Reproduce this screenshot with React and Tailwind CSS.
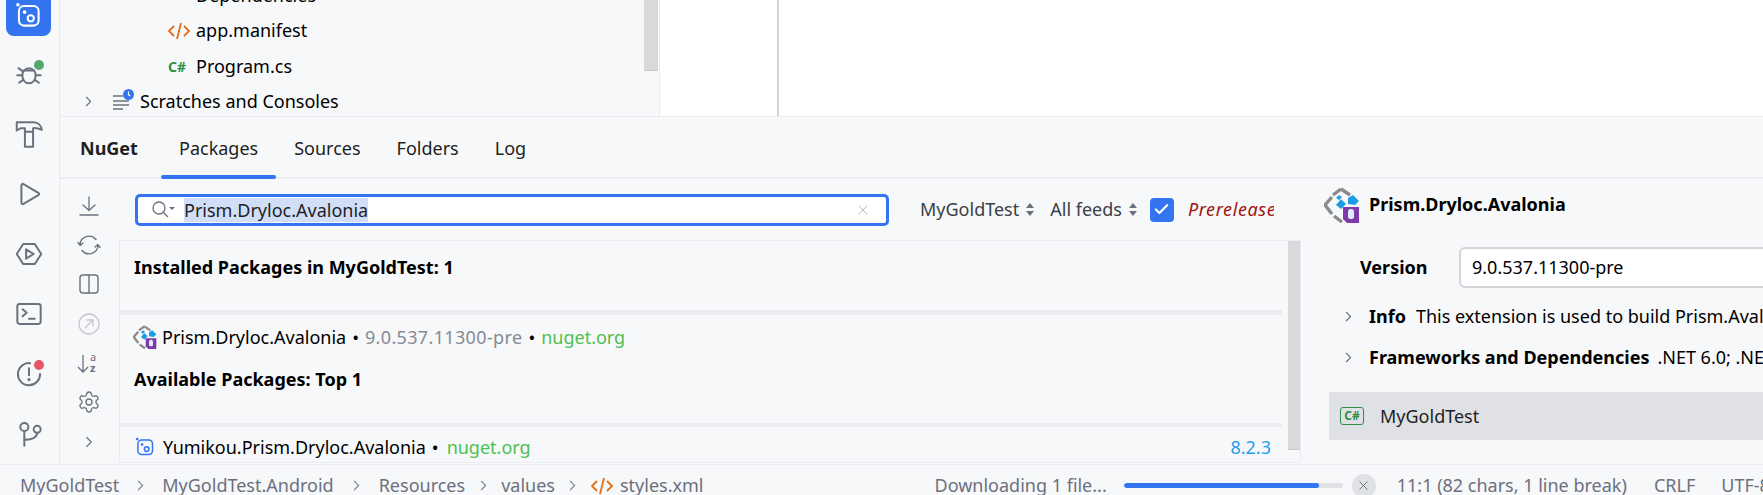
import { ChevronRight, X, Check, Settings } from 'lucide-react';

const font = { fontFamily: '"Noto Sans", "Open Sans", sans-serif' };

// stroke icon wrapper, all drawn on a 24 box
const Ico = ({ size = 28, color = '#6c707e', width = 1.7, children }) => (
  <svg width={size} height={size} viewBox="0 0 24 24" fill="none" stroke={color} strokeWidth={width} strokeLinecap="round" strokeLinejoin="round">
    {children}
  </svg>
);

const Dot = ({ color }) => (
  <span className="absolute right-[7px] top-[9px] w-[10px] h-[10px] rounded-full" style={{ background: color }} />
);

const RailItem = ({ children, active }) => (
  <div className={`relative w-[45px] h-[45px] shrink-0 flex items-center justify-center rounded-[8px] ${active ? 'bg-[#3574f0]' : ''}`}>
    {children}
  </div>
);

const ServicesIcon = ({ size, color }) => (
  <svg width={size} height={size} viewBox="0 0 24 24" fill="none" stroke={color} strokeWidth="1.8">
    <circle cx="2.6" cy="2.4" r="1.6" fill={color} stroke="none" />
    <rect x="3.5" y="3.5" width="17.5" height="17.5" rx="4.5" />
    <circle cx="8.5" cy="9" r="1.6" fill={color} stroke="none" />
    <circle cx="14" cy="14.5" r="2.8" />
  </svg>
);

const XmlIcon = () => (
  <svg width="24" height="20" viewBox="0 0 24 20" fill="none" stroke="#e66d17" strokeWidth="1.8" className="shrink-0">
    <path d="M7 5 L2 10 L7 15" />
    <path d="M17 5 L22 10 L17 15" />
    <path d="M14 2 L10 18" />
  </svg>
);

const PrismIcon = ({ size }) => (
  <svg width={size} height={size} viewBox="0 0 36 36" fill="none" className="shrink-0">
    <path d="M17 2 L26 8 M17 2 L9 8 M8 10 L1 18 L8 27 M10 29 L18 35" stroke="#8a8a8a" strokeWidth="3.4" />
    <path d="M12 11 L15 8 L18 10 L15 13 Z M12 18 L17 12 L22 17 L17 22 Z" fill="#1c9be6" />
    <path d="M24 11 L29 8 L35 14 L31 18 L24 17 Z" fill="#1c9be6" />
    <path d="M19 20 H35 V36 H23 L19 32 Z" fill="#7d3aa8" />
    <rect x="24" y="22" width="6" height="10" rx="2.500" fill="#dfeafc" />
  </svg>
);

const Tab = ({ children, active }) => (
  <div className="relative h-full flex items-center px-[18px] pt-[3px] text-[#1e1f22]">
    {children}
    {active && <span className="absolute left-0 right-0 bottom-[-2px] h-[4px] rounded-full bg-[#3574f0]" />}
  </div>
);

const Crumb = ({ className }) => (
  <span className={`shrink-0 ${className}`}>
    <ChevronRight size={17} strokeWidth={1.5} className="text-[#818594] mx-[2px]" />
  </span>
);

const UpDown = () => (
  <svg width="8" height="13" viewBox="0 0 8 13" fill="#6c707e" className="ml-[7px] shrink-0">
    <path d="M4 0 L8 5 H0 Z M4 13 L8 8 H0 Z" />
  </svg>
);

const Chevron = () => <ChevronRight size={17} strokeWidth={1.5} className="text-[#6c707e] mr-[12px] shrink-0" />;

export default function App() {
  return (
    <div className="w-[1763px] h-[495px] overflow-hidden flex flex-col bg-[#f7f8fa] text-[18px] text-black" style={font}>
      <div className="flex h-[464px] overflow-hidden">
        {/* left rail */}
        <div className="w-[60px] shrink-0 border-r border-[#ebecf0] flex flex-col items-center gap-[15px] mt-[-9px] pr-[2px]">
          <RailItem active>
            <span className="mt-[3px]"><ServicesIcon size={27} color="#ffffff" /></span>
          </RailItem>
          <RailItem>
            <Ico>
              <path d="M8 9 a4.5 3.5 0 0 1 8 0" />
              <path d="M7.5 9 H16.5 C17.8 11 18 13 17.5 15 C17 18 14.5 20 12 20 C9.5 20 7 18 6.5 15 C6 13 6.2 11 7.500 9 Z" />
              <path d="M2 13 H6 M18 13 H22 M3 7 L7 10 M3.500 19.500 L7 17 M20.500 19.500 L17 17" />
            </Ico>
            <Dot color="#55a76a" />
          </RailItem>
          <RailItem>
            <Ico>
              <path d="M1.500 2 H16 C20 2 22.500 5 23 8.500 C20 7 18 6.800 15.500 7 V10 H8.500 V7 H5 L1.500 9 Z" />
              <path d="M8.500 10 V23 H15.500 V10" />
            </Ico>
          </RailItem>
          <RailItem>
            <Ico>
              <path d="M5.500 4.500 C5.500 3.500 6.500 3 7.300 3.500 L20 11 C20.800 11.500 20.800 12.500 20 13 L7.300 20.500 C6.500 21 5.500 20.500 5.500 19.500 Z" />
            </Ico>
          </RailItem>
          <RailItem>
            <Ico>
              <path d="M7 3.500 H17 L22.500 12 L17 20.500 H7 L1.500 12 Z" />
              <path d="M9.500 8 L16 12 L9.500 16 Z" />
            </Ico>
          </RailItem>
          <RailItem>
            <Ico>
              <rect x="2" y="3.500" width="20" height="17" rx="2" />
              <path d="M6.500 8 L10 11 L6.500 14" />
              <path d="M12 16 H17" />
            </Ico>
          </RailItem>
          <RailItem>
            <Ico>
              <path d="M13 2.700 A9.500 9.500 0 1 0 21.500 12" />
              <path d="M12 7 V13" />
              <circle cx="12" cy="16.800" r="0.6" fill="#6c707e" />
            </Ico>
            <Dot color="#e55765" />
          </RailItem>
          <RailItem>
            <Ico>
              <circle cx="8" cy="6" r="3.500" />
              <circle cx="19" cy="8" r="3" />
              <path d="M8 9.500 V22" />
              <path d="M8 17 C13 17 19 15.500 19 11" />
            </Ico>
          </RailItem>
        </div>

        <div className="flex-1 min-w-0 flex flex-col">
          {/* project tree and editor */}
          <div className="h-[117px] shrink-0 flex border-b border-[#ebecf0] overflow-hidden">
            <div className="w-[600px] shrink-0 relative border-r border-[#ebecf0]">
              <div className="flex flex-col mt-[-22.5px]">
                <div className="h-[35.5px] flex items-center pl-[109px] gap-[5px]">
                  <span className="w-[22px] text-[#6c707e] text-[12px]">● ●</span>
                  <span>Dependencies</span>
                </div>
                <div className="h-[35.5px] flex items-center pl-[107px] gap-[5px]">
                  <XmlIcon />
                  <span>app.manifest</span>
                </div>
                <div className="h-[35.5px] flex items-center pl-[108px] gap-[6px]">
                  <span className="w-[22px] text-[14px] font-bold text-[#2f8f46]">C#</span>
                  <span>Program.cs</span>
                </div>
                <div className="h-[35.5px] flex items-center pl-[20px]">
                  <ChevronRight size={17} strokeWidth={1.5} className="text-[#6c707e] mr-[16px]" />
                  <span className="relative mr-[5px] w-[22px] h-[20px]">
                    <svg width="22" height="20" viewBox="0 0 22 20" stroke="#6c707e" strokeWidth="1.4">
                      <path d="M0 4 H10 M0 9 H16 M0 13 H16 M0 17 H10" />
                    </svg>
                    <svg width="11" height="11" viewBox="0 0 11 11" className="absolute right-[1px] top-[-3px]">
                      <circle cx="5.500" cy="5.500" r="5.500" fill="#3574f0" />
                      <path d="M5.500 2.500 V5.800 L7.500 7" stroke="#fff" strokeWidth="1.1" fill="none" />
                    </svg>
                  </span>
                  <span>Scratches and Consoles</span>
                </div>
              </div>
              <div className="absolute right-[1px] top-0 w-[14px] h-[71px] bg-[#d9d9db] border-b border-[#c9c9cb]" />
            </div>
            <div className="flex-1 bg-white flex">
              <div className="ml-[117px] w-[2px] bg-[#d3d5db]" />
            </div>
          </div>

          {/* nuget tabs */}
          <div className="h-[62px] shrink-0 flex items-center border-b-2 border-[#ebecf0]">
            <span className="ml-[20px] w-[81px] pt-[3px] font-bold text-[#1e1f22]">NuGet</span>
            <Tab active>Packages</Tab>
            <Tab>Sources</Tab>
            <Tab>Folders</Tab>
            <Tab>Log</Tab>
          </div>

          <div className="flex-1 min-h-0 flex">
            {/* side toolbar */}
            <div className="w-[59px] shrink-0 flex flex-col items-center pt-[15px] gap-[15.2px] pr-[1px]">
              <Ico size={24} width={1.3}><path d="M12 3 V16 M6 11 L12 16.500 L18 11 M3 21 H21" /></Ico>
              <Ico size={24} width={1.3}><path d="M3 12 A9 9 0 0 1 19 6.500 M21 12 A9 9 0 0 1 5 17.500 M1 9.500 L3.200 12.500 L6 10 M23 14.500 L20.800 11.500 L18 14" /></Ico>
              <Ico size={24} width={1.4}><rect x="3" y="3" width="18" height="18" rx="3" /><path d="M12 3 V21" /></Ico>
              <Ico size={24} width={1.3} color="#c5c7cc"><circle cx="12" cy="12" r="10" /><path d="M8 16 L16 8 M10 8 H16 V14" /></Ico>
              <svg width="26" height="24" viewBox="0 0 26 24" fill="none" stroke="#6c707e" strokeWidth="1.3">
                <path d="M7 4 V21 M2 16 L7 21 L12 16" />
                <text x="14" y="10" fontSize="11" fill="#6c707e" stroke="none" style={font}>a</text>
                <text x="14" y="21" fontSize="11" fill="#6c707e" stroke="none" fontWeight="700" style={font}>z</text>
              </svg>
              <Settings size={24} strokeWidth={1.3} className="text-[#6c707e]" />
              <ChevronRight size={18} strokeWidth={1.5} className="text-[#6c707e] mt-[4px]" />
            </div>

            {/* search and results */}
            <div className="w-[1182px] shrink-0 flex flex-col">
              <div className="h-[61px] shrink-0 flex items-center whitespace-nowrap">
                <div className="ml-[16px] w-[754px] h-[32px] shrink-0 bg-white border-[3px] border-[#3574f0] rounded-[5px] flex items-center pl-[13px] pr-[15px]">
                  <svg width="24" height="20" viewBox="0 0 24 20" fill="none" stroke="#6c707e" strokeWidth="1.3" className="mr-[9px]">
                    <circle cx="8" cy="8" r="6" />
                    <path d="M12.500 12.500 L17 17" />
                    <path d="M18 7 H24 L21 10 Z" fill="#6c707e" stroke="none" />
                  </svg>
                  <span className="bg-[#d1def8] leading-[24px] text-[#1e1f22]">Prism.Dryloc.Avalonia</span>
                  <X size={16} strokeWidth={1.3} className="ml-auto text-[#a8adbd]" />
                </div>
                <span className="ml-[31px] text-[#3b3f46]">MyGoldTest</span>
                <UpDown />
                <span className="ml-[16px] text-[#3b3f46]">All feeds</span>
                <UpDown />
                <span className="ml-[13px] w-[24px] h-[24px] shrink-0 rounded-[4px] bg-[#3574f0] flex items-center justify-center">
                  <Check size={17} strokeWidth={3} className="text-white" />
                </span>
                <span className="ml-[14px] w-[86px] shrink-0 overflow-hidden italic text-[#a0160f] tracking-[0.6px]">Prerelease</span>
              </div>

              <div className="flex-1 min-h-0 flex border border-[#ebecf0] mb-[1px] overflow-hidden">
                <div className="w-[1162px] shrink-0 flex flex-col">
                  <div className="h-[69px] shrink-0 pl-[14px] pt-[13px] font-bold">Installed Packages in MyGoldTest: 1</div>
                  <div className="h-[5px] shrink-0 bg-[#ebecf0]" />
                  <div className="h-[108px] shrink-0 pl-[13px]">
                    <div className="h-[44px] flex items-center">
                      <PrismIcon size={24} />
                      <span className="ml-[5px]">Prism.Dryloc.Avalonia</span>
                      <span className="mx-[6px]">•</span>
                      <span className="text-[#868a91] tracking-[0.35px]">9.0.537.11300-pre</span>
                      <span className="mx-[6px]">•</span>
                      <span className="text-[#4fc04f]">nuget.org</span>
                    </div>
                    <div className="pl-[1px] pt-[7px] font-bold">Available Packages: Top 1</div>
                  </div>
                  <div className="h-[4px] shrink-0 bg-[#ebecf0]" />
                  <div className="flex-1 flex items-center pl-[15px] pr-[11px] pt-[5px]">
                    <ServicesIcon size={20} color="#3574f0" />
                    <span className="ml-[8px]">Yumikou.Prism.Dryloc.Avalonia</span>
                    <span className="ml-[6px] mr-[8px]">•</span>
                    <span className="text-[#4fc04f]">nuget.org</span>
                    <span className="ml-auto text-[#1f9fe8]">8.2.3</span>
                  </div>
                </div>
                <div className="ml-[6px] w-[14px] h-[209px] bg-[#d9d9db] border-b border-[#c9c9cb]" />
              </div>
            </div>

            {/* package details */}
            <div className="flex-1 min-w-0 overflow-hidden whitespace-nowrap">
              <div className="h-[51px] flex items-center pl-[23px]">
                <PrismIcon size={36} />
                <span className="ml-[9px] font-bold">Prism.Dryloc.Avalonia</span>
              </div>
              <div className="h-[49px] mt-[13px] flex items-center pl-[59px]">
                <span className="w-[99px] shrink-0 font-bold">Version</span>
                <div className="w-[400px] h-[41px] shrink-0 bg-white border-2 border-[#d3d5db] rounded-[6px] flex items-center pl-[11px]">9.0.537.11300-pre</div>
              </div>
              <div className="h-[41px] mt-[4px] flex items-center pl-[39px]">
                <Chevron />
                <span className="font-bold mr-[10px]">Info</span>
                <span>This extension is used to build Prism.Avalonia applications.</span>
              </div>
              <div className="h-[41px] flex items-center pl-[39px]">
                <Chevron />
                <span className="font-bold mr-[8px]">Frameworks and Dependencies</span>
                <span>.NET 6.0; .NET 7.0</span>
              </div>
              <div className="mt-[14px] ml-[28px] h-[48px] bg-[#dfe1e5] flex items-center pl-[11px]">
                <span className="w-[24px] h-[18px] border border-[#2f8f46] rounded-[3px] text-[12px] leading-[16px] font-bold text-[#2f8f46] text-center">C#</span>
                <span className="ml-[16px] text-[#1e1f22]">MyGoldTest</span>
              </div>
            </div>
          </div>
        </div>
      </div>

      {/* status bar */}
      <div className="h-[31px] shrink-0 border-t border-[#ebecf0] flex items-center pl-[20px] pt-[11px] text-[#6c707e] whitespace-nowrap">
        <span>MyGoldTest</span>
        <Crumb className="mx-[11px]" />
        <span>MyGoldTest.Android</span>
        <Crumb className="mx-[12px]" />
        <span>Resources</span>
        <Crumb className="mx-[7.5px]" />
        <span>values</span>
        <Crumb className="mx-[7px]" />
        <XmlIcon />
        <span className="ml-[6px]">styles.xml</span>
        <span className="ml-[231px]">Downloading 1 file...</span>
        <div className="ml-[17px] w-[219px] h-[5px] shrink-0 rounded-full bg-[#dfe1e5] overflow-hidden">
          <div className="h-full bg-[#3574f0] rounded-full w-[195px]" />
        </div>
        <span className="ml-[9px] w-[24px] h-[24px] shrink-0 rounded-full bg-[#dfe1e5] flex items-center justify-center">
          <X size={15} strokeWidth={1.5} />
        </span>
        <span className="ml-[21px]">11:1 (82 chars, 1 line break)</span>
        <span className="ml-[27px]">CRLF</span>
        <span className="ml-[26px]">UTF-8</span>
      </div>
    </div>
  );
}
